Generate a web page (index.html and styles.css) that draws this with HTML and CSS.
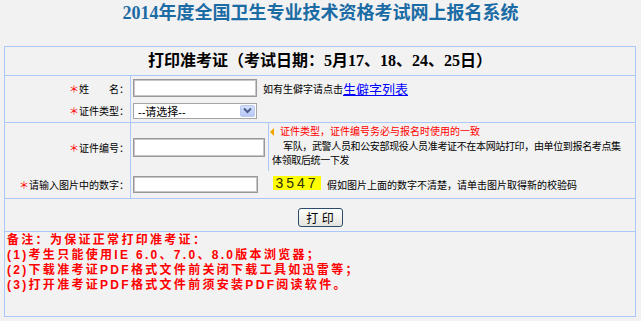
FILE: index.html
```html
<!DOCTYPE html>
<html lang="zh-CN">
<head>
    <meta charset="UTF-8">
    <meta name="viewport" content="width=device-width, initial-scale=1.0">
    <title>打印准考证</title>
    <link rel="stylesheet" href="styles.css">
</head>
<body>
    <h1 class="sys-title">2014年度全国卫生专业技术资格考试网上报名系统</h1>

    <div class="panel">
        <div class="panel-head">打印准考证（考试日期：5月17、18、24、25日）</div>

        <!-- 姓名 / 证件类型 -->
        <div class="block-base">
            <div class="label-col">
                <div class="line line-name"><span class="req">＊</span>姓　　名：</div>
                <div class="line line-type"><span class="req">＊</span>证件类型：</div>
            </div>
            <div class="field-col">
                <div class="line line-name">
                    <input type="text" class="txt txt-name">
                    <span class="tip">如有生僻字请点击</span><a href="#" class="rare-link">生僻字列表</a>
                </div>
                <div class="line line-type">
                    <div class="fake-select">
                        <span class="sel-text">--请选择--</span>
                        <span class="sel-btn">
                            <svg width="9" height="7" viewBox="0 0 9 7"><path d="M1 1.5 L4.5 5 L8 1.5" fill="none" stroke="#4a5f8c" stroke-width="2"/></svg>
                        </span>
                    </div>
                </div>
            </div>
        </div>

        <!-- 证件编号 / 校验码 -->
        <div class="block-id">
            <div class="lbl"><span class="req">＊</span>证件编号：</div>
            <div class="fld"><input type="text" class="txt txt-id"></div>
            <div class="notice">
                <div class="warn"><span class="tri"></span>证件类型，证件编号务必与报名时使用的一致</div>
                <div class="info indent">军队，武警人员和公安部现役人员准考证不在本网站打印，由单位到报名考点集</div>
                <div class="info">体领取后统一下发</div>
            </div>
            <div class="lbl"><span class="req">＊</span>请输入图片中的数字：</div>
            <div class="fld"><input type="text" class="txt txt-code"></div>
            <div class="code-cell">
                <span class="code-img">3547</span>
                <span class="tip">假如图片上面的数字不清楚，请单击图片取得新的校验码</span>
            </div>
        </div>

        <div class="btn-row">
            <button class="print-btn">打 印</button>
        </div>

        <div class="notes">
            备注：为保证正常打印准考证：<br>
            (1)考生只能使用IE 6.0、7.0、8.0版本浏览器；<br>
            (2)下载准考证PDF格式文件前关闭下载工具如迅雷等；<br>
            (3)打开准考证PDF格式文件前须安装PDF阅读软件。
        </div>
    </div>
</body>
</html>
```

FILE: styles.css
```css
:root {
    --line: #aac8fb;
}

body {
    margin: 0;
    background: #f2f2f2;
    font-family: "Liberation Sans", "Noto Sans CJK SC", sans-serif;
    font-size: 10px;
    color: #000;
}

.sys-title {
    margin: 0;
    height: 26px;
    line-height: 26px;
    text-align: center;
    font-family: "Liberation Serif", "Noto Sans CJK SC", serif;
    font-size: 18px;
    font-weight: bold;
    color: #1b6ba4;
}

.panel {
    margin: 20px 0 0 4px;
    width: 630px;
    border: 1px solid var(--line);
}

.panel-head {
    height: 28px;
    line-height: 28px;
    text-align: center;
    font-family: "Liberation Serif", "Noto Sans CJK SC", serif;
    font-size: 16px;
    font-weight: bold;
    border-bottom: 1px solid var(--line);
}

.req {
    display: inline-block;
    width: 10px;
    color: #f00;
    text-align: left;
}

/* 姓名 / 证件类型 */
.block-base {
    display: flex;
    height: 46px;
    border-bottom: 1px solid var(--line);
}

.label-col {
    width: 124px;
    padding-right: 1px;
}

.label-col .line {
    justify-content: flex-end;
}

.field-col {
    flex: 1;
    border-left: 1px solid var(--line);
    padding-left: 2px;
}

.line {
    display: flex;
    align-items: center;
    white-space: nowrap;
}

.line-name { height: 24px; }
.line-type { height: 21px; }

.txt {
    box-sizing: border-box;
    margin: 0;
    background: #fff;
    border: 1px solid #999;
    box-shadow: inset 0 0 0 1px #c6c6c6;
}

.txt-name { width: 124px; height: 18px; }
.txt-id { width: 132px; height: 19px; }
.txt-code { width: 125px; height: 17px; }

.tip {
    margin-left: 6px;
}

.rare-link {
    font-size: 13px;
    color: #00f;
}

.fake-select {
    box-sizing: border-box;
    width: 124px;
    height: 16px;
    display: flex;
    align-items: center;
    justify-content: space-between;
    background: #fff;
    border: 1px solid #a5a5a5;
    padding: 0 1px 0 4px;
    font-size: 11px;
}

.sel-btn {
    width: 15px;
    height: 12px;
    display: flex;
    align-items: center;
    justify-content: center;
    border-radius: 2px;
    background: linear-gradient(#d6e1fd, #b6c8f6);
    border: 1px solid #b9c9ef;
    box-sizing: border-box;
}

/* 证件编号 / 校验码 */
.block-id {
    display: grid;
    grid-template-columns: 125px 138px 1fr;
    grid-template-rows: 48px 27px;
    border-bottom: 1px solid var(--line);
}

.lbl {
    display: flex;
    align-items: center;
    justify-content: flex-end;
    padding-right: 1px;
    white-space: nowrap;
}

.fld {
    display: flex;
    align-items: center;
    border-left: 1px solid var(--line);
    padding-left: 2px;
}

.notice {
    border-left: 1px solid var(--line);
    padding: 2px 0 0 1px;
    line-height: 14.5px;
    white-space: nowrap;
}

.warn {
    color: #f00;
}

.tri {
    display: inline-block;
    width: 0;
    height: 0;
    border-top: 4px solid transparent;
    border-bottom: 4px solid transparent;
    border-right: 4px solid #f2a400;
    margin-right: 6px;
    vertical-align: -1px;
}

.info {
    padding-left: 2px;
    letter-spacing: -0.35px;
}

.info.indent {
    padding-left: 13px;
}

.code-cell {
    display: flex;
    align-items: center;
    border-left: 1px solid transparent;
    padding-left: 4px;
    white-space: nowrap;
}

.code-img {
    display: inline-block;
    width: 48px;
    height: 14px;
    line-height: 14px;
    margin-top: -4px;
    background: #ff0;
    color: #2d2d10;
    font-size: 14px;
    letter-spacing: 3px;
    text-align: center;
}

.code-cell .tip {
    margin-left: 6px;
}

.btn-row {
    height: 23px;
    padding-top: 9px;
    text-align: center;
    border-bottom: 1px solid var(--line);
}

.print-btn {
    width: 45px;
    height: 19px;
    padding: 0;
    border: 1px solid #2c4b6b;
    border-radius: 3px;
    background: linear-gradient(#ffffff, #e4e4de);
    font-family: "Liberation Sans", "Noto Sans CJK SC", sans-serif;
    font-size: 12px;
    color: #000;
}

.notes {
    height: 83px;
    padding: 1px 0 0 2px;
    line-height: 15px;
    color: #f00;
    font-size: 12px;
    font-weight: bold;
    letter-spacing: 2.3px;
    white-space: nowrap;
}
```
